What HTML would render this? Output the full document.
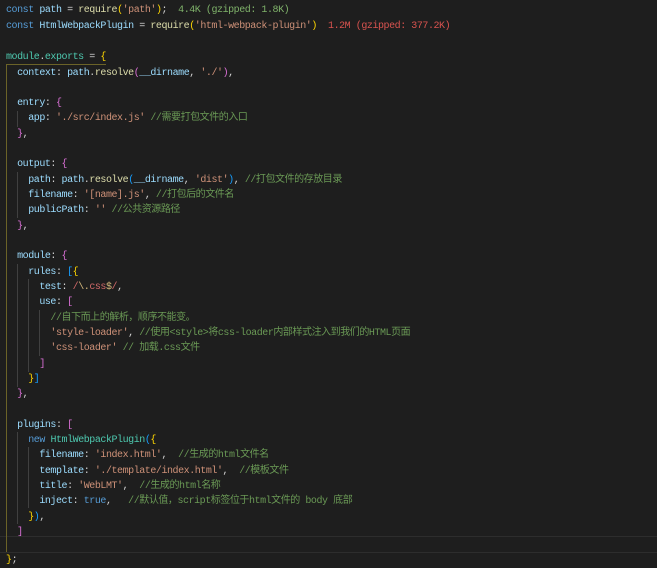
<!DOCTYPE html>
<html><head><meta charset="utf-8"><style>
html,body{margin:0;padding:0;background:#1e1e1e;width:657px;height:568px;overflow:hidden;}
#c{position:relative;top:2px;width:657px;height:566px;font-family:"Liberation Mono","Noto Sans CJK SC",monospace;font-size:10px;letter-spacing:-0.45px;color:#d4d4d4;}
.l{position:absolute;left:6px;white-space:pre;height:15px;line-height:15px;}
.k{color:#569cd6}.v{color:#9cdcfe}.f{color:#dcdcaa}.s{color:#ce9178}.c{color:#6a9955}.t{color:#4ec9b0}
.y{color:#ffd700}.p{color:#da70d6}.b{color:#179fff}.r{color:#d16969}.g{color:#d7ba7d}.sz{color:#7fb26a}.rd{color:#d9534f}
.guide{position:absolute;width:1px;background:#404040}
</style></head><body><div id="c">
<div style="position:absolute;left:0;top:534px;width:657px;height:17px;border-top:1px solid #2d2d2d;border-bottom:1px solid #2d2d2d;box-sizing:border-box"></div>
<div style="position:absolute;left:6px;top:535px;width:1px;height:15px;background:#aeafad"></div>
<div style="position:absolute;left:6px;top:62px;width:1px;height:488px;background:#6b6328"></div>
<div style="position:absolute;left:6px;top:62px;width:100px;height:1px;background:#6b6328"></div>
<div class="guide" style="left:17px;top:109px;height:16px"></div>
<div class="guide" style="left:17px;top:170px;height:46px"></div>
<div class="guide" style="left:17px;top:262px;height:123px"></div>
<div class="guide" style="left:28px;top:277px;height:93px"></div>
<div class="guide" style="left:39px;top:308px;height:46px"></div>
<div class="guide" style="left:17px;top:430px;height:92px"></div>
<div class="guide" style="left:28px;top:445px;height:61px"></div>
<div class="l" style="top:1px"><span class="k">const</span> <span class="v">path</span> = <span class="f">require</span><span class="y">(</span><span class="s">'path'</span><span class="y">)</span>;  <span class="sz">4.4K (gzipped: 1.8K)</span></div>
<div class="l" style="top:17px"><span class="k">const</span> <span class="v">HtmlWebpackPlugin</span> = <span class="f">require</span><span class="y">(</span><span class="s">'html-webpack-plugin'</span><span class="y">)</span>  <span class="rd">1.2M (gzipped: 377.2K)</span></div>
<div class="l" style="top:48px"><span class="t">module</span>.<span class="t">exports</span> = <span class="y">{</span></div>
<div class="l" style="top:64px">  <span class="v">context</span>: <span class="v">path</span>.<span class="f">resolve</span><span class="p">(</span><span class="v">__dirname</span>, <span class="s">'./'</span><span class="p">)</span>,</div>
<div class="l" style="top:94px">  <span class="v">entry</span>: <span class="p">{</span></div>
<div class="l" style="top:109px">    <span class="v">app</span>: <span class="s">'./src/index.js'</span> <span class="c">//需要打包文件的入口</span></div>
<div class="l" style="top:125px">  <span class="p">}</span>,</div>
<div class="l" style="top:155px">  <span class="v">output</span>: <span class="p">{</span></div>
<div class="l" style="top:171px">    <span class="v">path</span>: <span class="v">path</span>.<span class="f">resolve</span><span class="b">(</span><span class="v">__dirname</span>, <span class="s">'dist'</span><span class="b">)</span>, <span class="c">//打包文件的存放目录</span></div>
<div class="l" style="top:186px">    <span class="v">filename</span>: <span class="s">'[name].js'</span>, <span class="c">//打包后的文件名</span></div>
<div class="l" style="top:201px">    <span class="v">publicPath</span>: <span class="s">''</span> <span class="c">//公共资源路径</span></div>
<div class="l" style="top:217px">  <span class="p">}</span>,</div>
<div class="l" style="top:247px">  <span class="v">module</span>: <span class="p">{</span></div>
<div class="l" style="top:263px">    <span class="v">rules</span>: <span class="b">[</span><span class="y">{</span></div>
<div class="l" style="top:278px">      <span class="v">test</span>: <span class="r">/</span><span class="g">\.</span><span class="r">css</span><span class="g">$</span><span class="r">/</span>,</div>
<div class="l" style="top:293px">      <span class="v">use</span>: <span class="p">[</span></div>
<div class="l" style="top:309px">        <span class="c">//自下而上的解析，顺序不能变。</span></div>
<div class="l" style="top:324px">        <span class="s">'style-loader'</span>, <span class="c">//使用&lt;style&gt;将css-loader内部样式注入到我们的HTML页面</span></div>
<div class="l" style="top:339px">        <span class="s">'css-loader'</span> <span class="c">// 加载.css文件</span></div>
<div class="l" style="top:355px">      <span class="p">]</span></div>
<div class="l" style="top:370px">    <span class="y">}</span><span class="b">]</span></div>
<div class="l" style="top:385px">  <span class="p">}</span>,</div>
<div class="l" style="top:416px">  <span class="v">plugins</span>: <span class="p">[</span></div>
<div class="l" style="top:431px">    <span class="k">new</span> <span class="t">HtmlWebpackPlugin</span><span class="b">(</span><span class="y">{</span></div>
<div class="l" style="top:446px">      <span class="v">filename</span>: <span class="s">'index.html'</span>,  <span class="c">//生成的html文件名</span></div>
<div class="l" style="top:462px">      <span class="v">template</span>: <span class="s">'./template/index.html'</span>,  <span class="c">//模板文件</span></div>
<div class="l" style="top:477px">      <span class="v">title</span>: <span class="s">'WebLMT'</span>,  <span class="c">//生成的html名称</span></div>
<div class="l" style="top:492px">      <span class="v">inject</span>: <span class="k">true</span>,   <span class="c">//默认值，script标签位于html文件的 body 底部</span></div>
<div class="l" style="top:508px">    <span class="y">}</span><span class="b">)</span>,</div>
<div class="l" style="top:523px">  <span class="p">]</span></div>
<div class="l" style="top:551px"><span class="y">}</span>;</div>
</div></body></html>
